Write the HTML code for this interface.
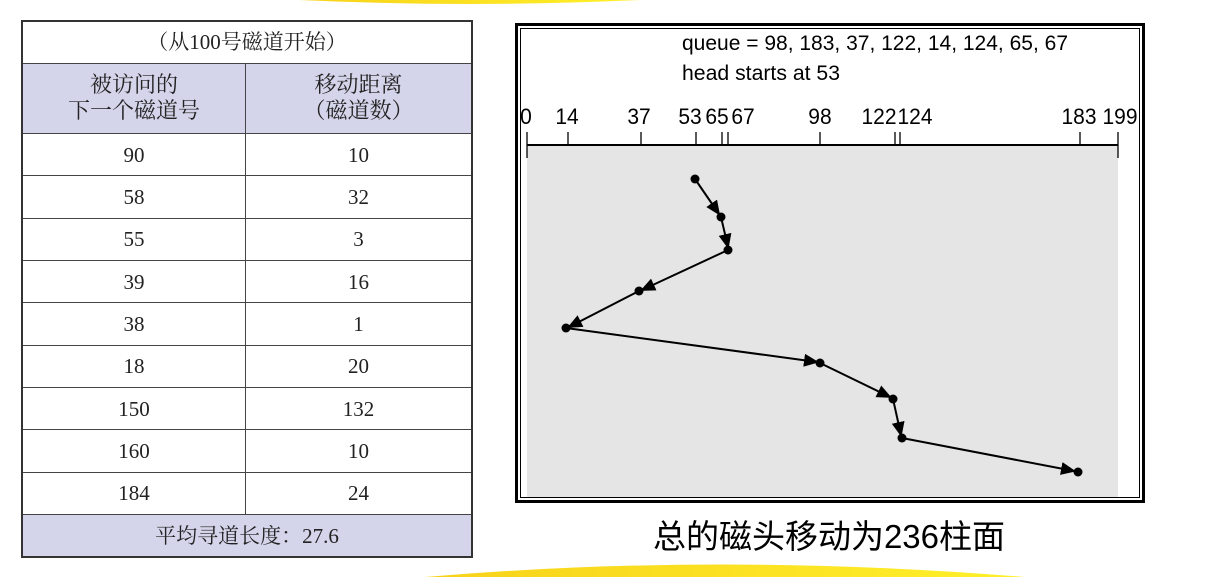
<!DOCTYPE html>
<html><head><meta charset="utf-8"><style>
body{margin:0;width:1217px;height:577px;background:#fff;position:relative;overflow:hidden;font-family:"Liberation Serif","Noto Serif CJK SC",serif}
table{position:absolute;left:21px;top:20px;width:452px;height:538px;border-collapse:collapse;border:2px solid #333}
td{border:1.5px solid #444;text-align:center;font-size:21px;color:#222;padding:0;line-height:26px}
tr{height:42.3px}
.p{background:#d4d4ea}
.h td{font-size:22px}
</style></head><body>
<svg width="1217" height="577" style="position:absolute;left:0;top:0">
<defs><linearGradient id="y" x1="0" x2="1"><stop offset="0" stop-color="#f7d21a"/><stop offset="1" stop-color="#fff02a"/></linearGradient>
<marker id="a" markerWidth="16" markerHeight="14" refX="13" refY="6.5" orient="auto" markerUnits="userSpaceOnUse"><path d="M0,0L15,6.5L0,13z" fill="#000"/></marker></defs>
<path d="M300,0 Q470,8 640,0Z" fill="url(#y)"/>
<path d="M425,577 Q720,552 1025,577Z" fill="url(#y)"/>
<rect x="516.5" y="24.5" width="627" height="477" fill="#fff" stroke="#000" stroke-width="3"/>
<rect x="520.5" y="28.5" width="619" height="469" fill="none" stroke="#000" stroke-width="1"/>
<rect x="527" y="145" width="591" height="352" fill="#e5e5e5"/>
<g font-family="Liberation Sans,sans-serif" font-size="21" fill="#000">
<text x="682" y="50" textLength="386" lengthAdjust="spacingAndGlyphs">queue = 98, 183, 37, 122, 14, 124, 65, 67</text>
<text x="682" y="80" textLength="158" lengthAdjust="spacingAndGlyphs">head starts at 53</text>
<g font-size="21" text-anchor="middle" transform="translate(0,124) scale(1,1.05)">
<text x="526" y="0">0</text><text x="567" y="0">14</text><text x="639" y="0">37</text><text x="690" y="0">53</text><text x="717" y="0">65</text><text x="743" y="0">67</text><text x="820" y="0">98</text><text x="879" y="0">122</text><text x="915" y="0">124</text><text x="1079" y="0">183</text><text x="1120" y="0">199</text></g></g>
<g stroke="#000" stroke-width="1.3">
<line x1="527" y1="145" x2="1118" y2="145" stroke-width="2"/>
<line x1="527" y1="132" x2="527" y2="158"/><line x1="1118" y1="132" x2="1118" y2="158"/>
<line x1="568" y1="132" x2="568" y2="145"/><line x1="641" y1="132" x2="641" y2="145"/><line x1="696" y1="132" x2="696" y2="145"/><line x1="722" y1="132" x2="722" y2="145"/><line x1="728" y1="132" x2="728" y2="145"/><line x1="820" y1="132" x2="820" y2="145"/><line x1="895" y1="132" x2="895" y2="145"/><line x1="900" y1="132" x2="900" y2="145"/><line x1="1080" y1="132" x2="1080" y2="145"/>
</g>
<g stroke="#000" stroke-width="2" fill="none" marker-end="url(#a)">
<line x1="695" y1="179" x2="719" y2="214"/>
<line x1="721" y1="217" x2="728" y2="247"/>
<line x1="728" y1="250" x2="642" y2="290"/>
<line x1="639" y1="291" x2="569" y2="327"/>
<line x1="566" y1="328" x2="817" y2="362"/>
<line x1="820" y1="363" x2="890" y2="397"/>
<line x1="893" y1="399" x2="901" y2="435"/>
<line x1="902" y1="438" x2="1074" y2="471"/>
</g>
<g fill="#000"><circle cx="695" cy="179" r="4.5"/><circle cx="721" cy="217" r="4.5"/><circle cx="728" cy="250" r="4.5"/><circle cx="639" cy="291" r="4.5"/><circle cx="566" cy="328" r="4.5"/><circle cx="820" cy="363" r="4.5"/><circle cx="893" cy="399" r="4.5"/><circle cx="902" cy="438" r="4.5"/><circle cx="1078" cy="472" r="4.5"/></g>
<text x="829" y="548" text-anchor="middle" font-family="Liberation Sans,'Noto Sans CJK SC',sans-serif" font-size="33" fill="#000" textLength="352" lengthAdjust="spacingAndGlyphs">总的磁头移动为236柱面</text>
</svg>
<table>
<tr><td colspan="2">（从100号磁道开始）</td></tr>
<tr class="p h" style="height:70px"><td style="width:222px">被访问的<br>下一个磁道号</td><td>移动距离<br>（磁道数）</td></tr>
<tr><td>90</td><td>10</td></tr>
<tr><td>58</td><td>32</td></tr>
<tr><td>55</td><td>3</td></tr>
<tr><td>39</td><td>16</td></tr>
<tr><td>38</td><td>1</td></tr>
<tr><td>18</td><td>20</td></tr>
<tr><td>150</td><td>132</td></tr>
<tr><td>160</td><td>10</td></tr>
<tr><td>184</td><td>24</td></tr>
<tr class="p"><td colspan="2">平均寻道长度：27.6</td></tr>
</table>
</body></html>
